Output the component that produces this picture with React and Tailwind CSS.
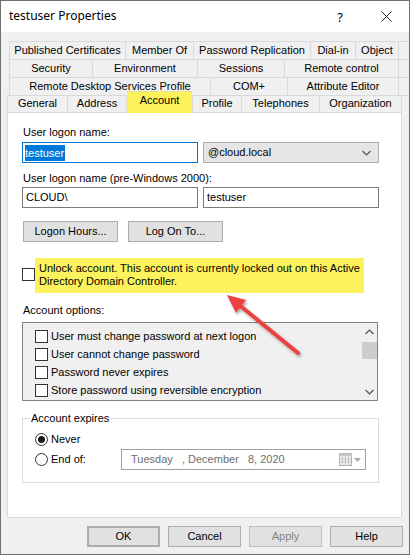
import React from "react";

const row1 = [
  ["Published Certificates", "w-[116px]"],
  ["Member Of", "w-[68px]"],
  ["Password Replication", "w-[117px]"],
  ["Dial-in", "w-[45px]"],
  ["Object", "w-[43px]"],
];
const row2 = [
  ["Security", "w-[83px]"],
  ["Environment", "w-[105px]"],
  ["Sessions", "w-[87px]"],
  ["Remote control", "w-[114px]"],
];
const row3 = [
  ["Remote Desktop Services Profile", "w-[201px]"],
  ["COM+", "w-[77px]"],
  ["Attribute Editor", "w-[111px]"],
];

function TabRow({ items }) {
  return (
    <div className="flex h-[18px] ml-[8px] border-t border-l border-[#d9d9d9]">
      {items.map(([label, w]) => (
        <div
          key={label}
          className={`${w} flex items-center justify-center border-r border-[#d9d9d9] leading-[13px] whitespace-nowrap`}
        >
          {label}
        </div>
      ))}
    </div>
  );
}

function Check({ className = "" }) {
  return <div className={`w-[13px] h-[13px] border border-[#333333] bg-white shrink-0 ${className}`} />;
}

function Chevron({ up }) {
  return (
    <svg width="9" height="6" viewBox="0 0 9 6">
      <polyline
        points={up ? "0.5,5 4.5,1 8.5,5" : "0.5,1 4.5,5 8.5,1"}
        fill="none"
        stroke="#555555"
        strokeWidth="1.2"
      />
    </svg>
  );
}

function Btn({ children, className = "" }) {
  return (
    <div
      className={`w-[73px] h-[21px] flex items-center justify-center border border-[#adadad] bg-[#e1e1e1] leading-[13px] ${className}`}
    >
      {children}
    </div>
  );
}

export default function App() {
  return (
    <div className="w-[411px] h-[556px] bg-white font-['Liberation_Sans',Arial,sans-serif] text-[11px] text-black">
      <div className="relative w-[410px] h-[555px] border border-[#707070] flex flex-col">
        {/* title bar */}
        <div className="h-[31px] bg-white flex items-center pl-[8px] shrink-0">
          <span className="font-['Noto_Sans',sans-serif] text-[12px] leading-[16px] mt-[-1px]">testuser Properties</span>
          <div className="ml-auto flex">
            <div className="w-[46px] flex justify-center font-['Noto_Sans',sans-serif] text-[13px] leading-[16px]">?</div>
            <div className="w-[46px] flex justify-center items-center">
              <svg width="11" height="11" viewBox="0 0 11 11">
                <path d="M0.5 0.5 L10.5 10.5 M10.5 0.5 L0.5 10.5" stroke="#222" strokeWidth="1" fill="none" />
              </svg>
            </div>
          </div>
        </div>

        {/* body */}
        <div className="flex-1 bg-[#f0f0f0] pt-[9px]">
          <TabRow items={row1} />
          <TabRow items={row2} />
          <TabRow items={row3} />
          <div className="flex items-end h-[17px] ml-[6px] border-t border-[#d9d9d9]">
            <div className="w-[61px] h-[17px] flex items-center justify-center border-l border-r border-[#d9d9d9]">General</div>
            <div className="w-[59px] h-[17px] flex items-center justify-center border-r border-[#d9d9d9]">Address</div>
            <div className="relative z-10 w-[65px] h-[22px] mb-[-1px] pb-[5px] flex items-center justify-center bg-[#fcf35c] border-t border-[#e9e39a]">Account</div>
            <div className="w-[50px] h-[17px] flex items-center justify-center border-l border-r border-[#d9d9d9]">Profile</div>
            <div className="w-[78px] h-[17px] flex items-center justify-center border-r border-[#d9d9d9]">Telephones</div>
            <div className="w-[82px] h-[17px] flex items-center justify-center border-r border-[#d9d9d9]">Organization</div>
          </div>

          {/* panel */}
          <div className="ml-[6px] w-[395px] h-[406px] bg-white border border-[#d9d9d9] pl-[14px] pt-[13px] leading-[13px]">
            <div className="h-[13px] pl-[1px]">User logon name:</div>
            <div className="flex gap-[5px] mt-[3px]">
              <div className="w-[176px] h-[21px] border border-[#0078d7] flex items-center pl-[2px]">
                <span className="bg-[#0078d7] text-white h-[16px] leading-[16px] pr-[1px]">testuser</span>
              </div>
              <div className="w-[176px] h-[21px] border border-[#adadad] bg-[#e5e5e5] flex items-center pl-[4px] pr-[7px]">
                <span>@cloud.local</span>
                <span className="ml-auto">
                  <Chevron />
                </span>
              </div>
            </div>
            <div className="h-[13px] mt-[9px] pl-[1px]">User logon name (pre-Windows 2000):</div>
            <div className="flex gap-[5px] mt-[2px]">
              <div className="w-[176px] h-[21px] border border-[#7a7a7a] flex items-center pl-[3px]">CLOUD\</div>
              <div className="w-[176px] h-[21px] border border-[#7a7a7a] flex items-center pl-[3px]">testuser</div>
            </div>
            <div className="flex gap-[10px] mt-[13px] ml-[1px]">
              <div className="w-[95px] h-[21px] border border-[#adadad] bg-[#e1e1e1] flex items-center justify-center">Logon Hours...</div>
              <div className="w-[95px] h-[21px] border border-[#adadad] bg-[#e1e1e1] flex items-center justify-center">Log On To...</div>
            </div>

            {/* unlock */}
            <div className="flex mt-[16px] h-[35px]">
              <Check className="mt-[10px]" />
              <div className="w-[329px] h-[35px] bg-[#fcf35c] pl-[4px] pt-[4px]">
                <div>Unlock account. This account is currently locked out on this Active</div>
                <div>Directory Domain Controller.</div>
              </div>
            </div>

            <div className="h-[13px] mt-[11px] pl-[1px]">Account options:</div>
            <div className="mt-[5px] w-[356px] h-[79px] border border-[#828282] bg-[#f0f0f0] flex">
              <div className="flex-1 pl-[12px] pt-[4px]">
                {[
                  "User must change password at next logon",
                  "User cannot change password",
                  "Password never expires",
                  "Store password using reversible encryption",
                ].map((t) => (
                  <div key={t} className="h-[18px] flex items-center gap-[3px]">
                    <Check />
                    <span>{t}</span>
                  </div>
                ))}
              </div>
              <div className="w-[16px] flex flex-col items-center">
                <div className="h-[18px] flex items-center justify-center">
                  <Chevron up />
                </div>
                <div className="w-[15px] h-[17px] mt-[1px] bg-[#cdcdcd]" />
                <div className="flex-1" />
                <div className="h-[17px] flex items-center justify-center">
                  <Chevron />
                </div>
              </div>
            </div>

            {/* account expires */}
            <fieldset className="mt-[11px] w-[357px] border border-[#dcdcdc] pl-[12px] pb-[12px]">
              <legend className="ml-[-5px] px-[1px] leading-[13px]">Account expires</legend>
              <div className="flex items-center h-[13px] mt-[8px]">
                <div className="w-[13px] h-[13px] rounded-full border border-[#333333] bg-white flex items-center justify-center">
                  <div className="w-[7px] h-[7px] rounded-full bg-[#1a1a1a]" />
                </div>
                <span className="ml-[3px]">Never</span>
              </div>
              <div className="flex items-center h-[21px] mt-[3px]">
                <div className="w-[13px] h-[13px] rounded-full border border-[#333333] bg-white" />
                <span className="ml-[3px] w-[70px]">End of:</span>
                <div className="w-[245px] h-[21px] border border-[#a0a0a0] bg-white flex items-center pl-[9px] pr-[4px] text-[#6d6d6d]">
                  <span className="whitespace-pre">Tuesday   , December   8, 2020</span>
                  <span className="ml-auto flex items-center gap-[2px]">
                    <svg width="13" height="13" viewBox="0 0 13 13">
                      <rect x="0.5" y="0.5" width="12" height="12" fill="#f4f4f4" stroke="#b0b0b0" />
                      <rect x="0.5" y="0.5" width="12" height="2.5" fill="#c8c8c8" />
                      <path d="M3.5 3 V12.5 M6.5 3 V12.5 M9.5 3 V12.5 M0.5 6 H12.5 M0.5 9 H12.5" stroke="#c4c4c4" strokeWidth="1" />
                    </svg>
                    <svg width="7" height="4" viewBox="0 0 7 4">
                      <polygon points="0,0 7,0 3.5,4" fill="#a8a8a8" />
                    </svg>
                  </span>
                </div>
              </div>
            </fieldset>
          </div>

          {/* dialog buttons */}
          <div className="flex justify-end gap-[8px] mt-[8px] pr-[6px]">
            <Btn className="border-2 border-[#0078d7]">OK</Btn>
            <Btn>Cancel</Btn>
            <Btn className="bg-[#cccccc] border-[#bfbfbf] text-[#838383]">Apply</Btn>
            <Btn>Help</Btn>
          </div>
        </div>

        {/* red arrow annotation */}
        <svg className="absolute left-[-1px] top-[-1px] pointer-events-none" width="411" height="556" viewBox="0 0 411 556">
          <defs>
            <filter id="sh" x="-20%" y="-20%" width="140%" height="140%">
              <feDropShadow dx="1.5" dy="2" stdDeviation="1.5" floodColor="#000" floodOpacity="0.35" />
            </filter>
          </defs>
          <g filter="url(#sh)">
            <line x1="298" y1="353" x2="238" y2="304" stroke="#e9423f" strokeWidth="4" strokeLinecap="round" />
            <polygon points="227,295 246,300 236,313" fill="#e9423f" />
          </g>
        </svg>
      </div>
    </div>
  );
}
